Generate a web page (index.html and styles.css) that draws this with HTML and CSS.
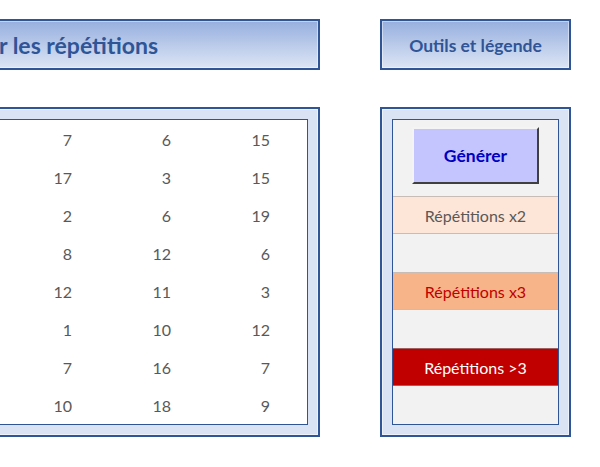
FILE: index.html
```html
<!DOCTYPE html>
<html lang="fr">
<head>
  <meta charset="UTF-8" />
  <meta name="viewport" content="width=device-width, initial-scale=1.0"/>
  <title>Repérer les répétitions</title>
  <link rel="stylesheet" href="styles.css">
</head>
<body>

  <div class="sheet">
    <div class="main">
      <h1 class="title title-main">Repérer les répétitions</h1>

      <div class="panel">
        <div class="panel-inner">
          <div class="grid" id="grid"></div>
        </div>
      </div>
    </div>

    <div class="side">
      <h2 class="title title-side">Outils et légende</h2>

      <div class="panel">
        <div class="panel-inner tools">
          <div class="tool-row tool-button">
            <button class="generate">Générer</button>
          </div>
          <div class="tool-row legend legend-x2">Répétitions x2</div>
          <div class="tool-row"></div>
          <div class="tool-row legend legend-x3">Répétitions x3</div>
          <div class="tool-row"></div>
          <div class="tool-row legend legend-more">Répétitions &gt;3</div>
          <div class="tool-row"></div>
        </div>
      </div>
    </div>
  </div>

  <script>
    const values = [
      [7, 6, 15],
      [17, 3, 15],
      [2, 6, 19],
      [8, 12, 6],
      [12, 11, 3],
      [1, 10, 12],
      [7, 16, 7],
      [10, 18, 9]
    ];

    const grid = document.getElementById("grid");
    values.forEach(row => {
      row.forEach(v => {
        grid.innerHTML += `<div class="cell">${v}</div>`;
      });
    });
  </script>

</body>
</html>
```

FILE: styles.css
```css
body {
  margin: 0;
  background: white;
  font-family: Lato, 'Open Sans', sans-serif;
  overflow: hidden;
}

.sheet {
  display: grid;
  grid-template-columns: 380px 191px;
  column-gap: 60px;
  margin-left: -60px;
  padding-top: 19px;
}

.title {
  height: 51px;
  box-sizing: border-box;
  margin: 0 0 37px 0;
  border: 2px solid #2f5597;
  background: linear-gradient(to bottom, #97afdf, #dce5f4);
  box-shadow: inset 0 0 0 1px rgba(255,255,255,0.45);
  color: #2f5597;
  font-weight: bold;
  display: flex;
  align-items: center;
  white-space: nowrap;
}

.title-main {
  justify-content: flex-end;
  padding-right: 160px;
  font-size: 23px;
}

.title-side {
  justify-content: center;
  font-size: 17.5px;
  padding-top: 1px;
}

.panel {
  border: 2px solid #2f5597;
  background: #dae3f3;
  padding: 10px;
  box-shadow: inset 0 0 0 1px rgba(255,255,255,0.5);
}

.panel-inner {
  border: 1px solid #2f5597;
  background: white;
  height: 304px;
}

.grid {
  display: grid;
  grid-template-columns: repeat(3, 99px);
  grid-auto-rows: 38px;
  justify-content: end;
  padding-right: 37px;
}

.cell {
  display: flex;
  align-items: center;
  justify-content: flex-end;
  font-size: 16px;
  color: #595959;
}

.tools {
  background: #f2f2f2;
  display: flex;
  flex-direction: column;
}

.tool-row {
  height: 38px;
  box-sizing: border-box;
  flex-shrink: 0;
}

.tool-button {
  height: 76px;
  display: flex;
  justify-content: center;
  align-items: flex-start;
}

.generate {
  width: 127px;
  height: 57px;
  margin-top: 7px;
  background: #c4c4ff;
  border: 2px solid;
  border-color: #f4f4f4 #404040 #404040 #f4f4f4;
  color: #0000c0;
  font-family: Lato, 'Open Sans', sans-serif;
  font-weight: bold;
  font-size: 17.5px;
}

.legend {
  display: flex;
  align-items: center;
  justify-content: center;
  font-size: 16px;
  border-top: 1px solid #c8bcb6;
  border-bottom: 1px solid #c8bcb6;
}

.legend-x2 {
  background: #fde6d8;
  color: #595959;
}

.legend-x3 {
  background: #f6b488;
  color: #c00000;
}

.legend-more {
  background: #c00000;
  color: white;
  border-color: #a06060;
}
```
